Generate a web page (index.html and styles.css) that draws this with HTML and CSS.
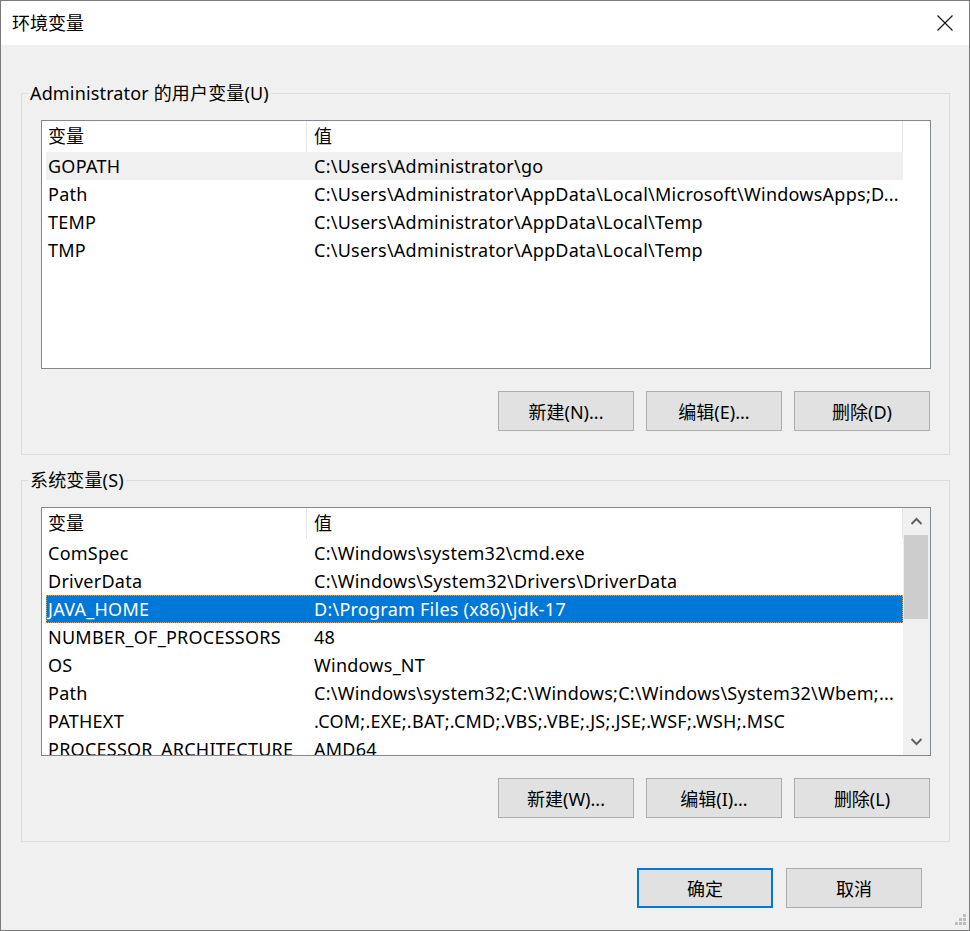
FILE: index.html
```html
<!DOCTYPE html>
<html lang="zh-CN">
<head>
<meta charset="utf-8">
<title>环境变量</title>
<link rel="stylesheet" href="styles.css">
</head>
<body>
<div class="window">
  <div class="titlebar">
    <span class="title">环境变量</span>
    <svg class="close" width="16" height="16" viewBox="0 0 16 16"><path d="M0.5 0.5 L15.5 15.5 M15.5 0.5 L0.5 15.5" stroke="#111" stroke-width="1.1" fill="none"/></svg>
  </div>
  <div class="content">
    <fieldset class="group">
      <legend class="legend">Administrator 的用户变量(U)</legend>
      <div class="list">
        <div class="list-main">
          <div class="list-head">
            <div class="hcell hc1">变量</div>
            <div class="hcell hc2">值</div>
          </div>
          <div class="rows">
            <div class="row hover"><div class="cell c1">GOPATH</div><div class="cell c2">C:\Users\Administrator\go</div></div>
            <div class="row"><div class="cell c1">Path</div><div class="cell c2">C:\Users\Administrator\AppData\Local\Microsoft\WindowsApps;D...</div></div>
            <div class="row"><div class="cell c1">TEMP</div><div class="cell c2">C:\Users\Administrator\AppData\Local\Temp</div></div>
            <div class="row"><div class="cell c1">TMP</div><div class="cell c2">C:\Users\Administrator\AppData\Local\Temp</div></div>
          </div>
        </div>
      </div>
      <div class="btnrow">
        <button class="btn">新建(N)...</button>
        <button class="btn">编辑(E)...</button>
        <button class="btn">删除(D)</button>
      </div>
    </fieldset>

    <fieldset class="group group-sys">
      <legend class="legend">系统变量(S)</legend>
      <div class="list">
        <div class="list-main">
          <div class="list-head">
            <div class="hcell hc1">变量</div>
            <div class="hcell hc2">值</div>
          </div>
          <div class="rows">
            <div class="row"><div class="cell c1">ComSpec</div><div class="cell c2">C:\Windows\system32\cmd.exe</div></div>
            <div class="row"><div class="cell c1">DriverData</div><div class="cell c2">C:\Windows\System32\Drivers\DriverData</div></div>
            <div class="row selected"><div class="cell c1">JAVA_HOME</div><div class="cell c2">D:\Program Files (x86)\jdk-17</div></div>
            <div class="row"><div class="cell c1">NUMBER_OF_PROCESSORS</div><div class="cell c2">48</div></div>
            <div class="row"><div class="cell c1">OS</div><div class="cell c2">Windows_NT</div></div>
            <div class="row"><div class="cell c1">Path</div><div class="cell c2">C:\Windows\system32;C:\Windows;C:\Windows\System32\Wbem;...</div></div>
            <div class="row"><div class="cell c1">PATHEXT</div><div class="cell c2">.COM;.EXE;.BAT;.CMD;.VBS;.VBE;.JS;.JSE;.WSF;.WSH;.MSC</div></div>
            <div class="row"><div class="cell c1">PROCESSOR_ARCHITECTURE</div><div class="cell c2">AMD64</div></div>
          </div>
        </div>
        <div class="scrollbar">
          <div class="sb-btn">
            <svg width="27" height="27" viewBox="0 0 27 27"><polyline points="8.5,16 13.5,11 18.5,16" fill="none" stroke="#606060" stroke-width="2"/></svg>
          </div>
          <div class="sb-track">
            <div class="sb-thumb"></div>
          </div>
          <div class="sb-btn">
            <svg width="27" height="27" viewBox="0 0 27 27"><polyline points="8.5,11 13.5,16 18.5,11" fill="none" stroke="#606060" stroke-width="2"/></svg>
          </div>
        </div>
      </div>
      <div class="btnrow">
        <button class="btn">新建(W)...</button>
        <button class="btn">编辑(I)...</button>
        <button class="btn">删除(L)</button>
      </div>
    </fieldset>

    <div class="dialog-btns">
      <button class="btn btn-default">确定</button>
      <button class="btn">取消</button>
    </div>
  </div>
  <svg class="grip" width="14" height="14" viewBox="0 0 14 14">
    <rect x="10" y="0" width="3" height="3" fill="#bdbdbd"/>
    <rect x="6" y="4" width="3" height="3" fill="#bdbdbd"/>
    <rect x="10" y="4" width="3" height="3" fill="#bdbdbd"/>
    <rect x="2" y="8" width="3" height="3" fill="#bdbdbd"/>
    <rect x="6" y="8" width="3" height="3" fill="#bdbdbd"/>
    <rect x="10" y="8" width="3" height="3" fill="#bdbdbd"/>
  </svg>
</div>
</body>
</html>
```

FILE: styles.css
```css
* { box-sizing: border-box; }

html, body {
  margin: 0;
  padding: 0;
  background: #f0f0f0;
}

body {
  font-family: "Noto Sans", "Noto Sans CJK SC", sans-serif;
  font-size: 18px;
  color: #000;
}

.window {
  position: relative;
  width: 970px;
  height: 931px;
  border: 1px solid #7a7a7a;
  background: #f0f0f0;
  overflow: hidden;
}

.titlebar {
  height: 44px;
  background: #fff;
  display: flex;
  align-items: center;
  justify-content: space-between;
  padding: 0 16px 0 11px;
}

.title {
  font-size: 18px;
  line-height: 24px;
}

.close {
  display: block;
}

.content {
  padding: 36px 19px 0 20px;
}

.group {
  margin: 0;
  border: 1px solid #dcdcdc;
  padding: 0 18px 23px 19px;
  min-width: 0;
}

.group-sys {
  margin-top: 13px;
}

.legend {
  padding: 0 2px;
  margin-left: -13px;
  line-height: 24px;
  font-size: 18px;
  letter-spacing: 0.15px;
}

.list {
  margin-top: 15px;
  height: 249px;
  border: 1px solid #828790;
  background: #fff;
  display: flex;
  overflow: hidden;
}

.list-main {
  width: 861px;
  flex: none;
  overflow: hidden;
}

.list-head {
  height: 31px;
  display: flex;
}

.hcell {
  height: 31px;
  line-height: 31px;
  border-right: 1px solid #e5e5e5;
  white-space: nowrap;
}

.hc1 {
  width: 265px;
  padding-left: 6px;
}

.hc2 {
  width: 596px;
  padding-left: 7px;
}

.rows {
  padding-left: 4px;
}

.row {
  height: 28px;
  display: flex;
  line-height: 28px;
  white-space: nowrap;
}

.row.hover {
  background: #f0f0f0;
}

.row.selected {
  background: #0078d7;
  color: #fff;
  outline: 1px dotted #f0a040;
  outline-offset: -1px;
}

.cell {
  overflow: hidden;
  text-overflow: ellipsis;
  letter-spacing: 0.25px;
}

.c1 {
  width: 261px;
  padding-left: 2px;
}

.c2 {
  width: 596px;
  padding-left: 7px;
  padding-right: 0;
}

.scrollbar {
  width: 27px;
  flex: none;
  background: #f0f0f0;
  display: flex;
  flex-direction: column;
}

.sb-btn {
  height: 27px;
  flex: none;
}

.sb-btn svg {
  display: block;
}

.sb-track {
  flex: 1;
  padding: 0 2px 0 1px;
}

.sb-thumb {
  height: 84px;
  background: #cdcdcd;
}

.btnrow {
  display: flex;
  justify-content: flex-end;
  gap: 12px;
  margin-top: 22px;
  margin-right: 1px;
}

.btn {
  width: 136px;
  height: 40px;
  border: 1px solid #adadad;
  background: #e1e1e1;
  font-family: "Noto Sans", "Noto Sans CJK SC", sans-serif;
  font-size: 18px;
  color: #000;
  padding: 0;
  margin: 0;
}

.btn-default {
  border: 2px solid #0078d7;
}

.dialog-btns {
  display: flex;
  justify-content: flex-end;
  gap: 13px;
  margin-top: 26px;
  margin-right: 28px;
}

.grip {
  position: absolute;
  right: 2px;
  bottom: 2px;
  display: block;
}
```
